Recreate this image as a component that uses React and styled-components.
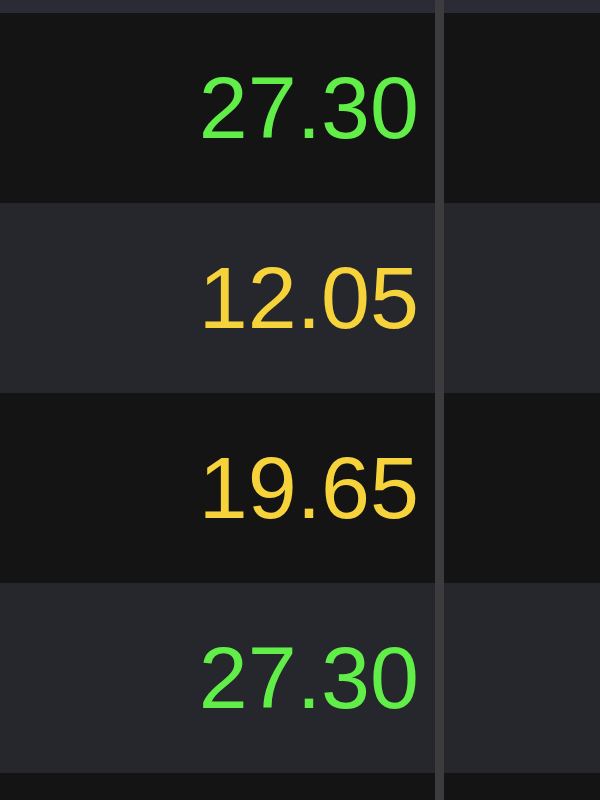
import React from "react";
import styled, { createGlobalStyle } from "styled-components";

const Global = createGlobalStyle`
  html, body { margin: 0; padding: 0; background: #141414; }
  body { width: 600px; height: 800px; overflow: hidden; }
`;

const Table = styled.div`
  width: 600px;
  height: 800px;
  display: flex;
  flex-direction: column;
  background: #141414;
  overflow: hidden;
  font-family: "Liberation Sans", Arial, sans-serif;
`;

const HeaderStrip = styled.div`
  flex: 0 0 13px;
  display: grid;
  grid-template-columns: 435px 9px 1fr;
  background: #2b2b36;
`;

const Row = styled.div`
  flex: 0 0 190px;
  display: grid;
  grid-template-columns: 435px 9px 1fr;
  background: ${(p) => (p.$alt ? "#26272c" : "#141414")};
`;

const Divider = styled.div`
  background: #3c3c3e;
`;

const ValueCell = styled.div`
  display: flex;
  align-items: center;
  justify-content: flex-end;
  padding-right: 16px;
  font-size: 88px;
  letter-spacing: 0;
  line-height: 1;
  color: ${(p) => (p.$tone === "up" ? "#62ee48" : "#f7d33b")};
`;

const EmptyCell = styled.div``;

const rows = [
  { v: "27.30", tone: "up" },
  { v: "12.05", tone: "mid" },
  { v: "19.65", tone: "mid" },
  { v: "27.30", tone: "up" },
  { v: "", tone: "mid" },
];

export default function App() {
  return (
    <>
      <Global />
      <Table>
        <HeaderStrip>
          <EmptyCell />
          <Divider />
          <EmptyCell />
        </HeaderStrip>
        {rows.map((r, i) => (
          <Row key={i} $alt={i % 2 === 1}>
            <ValueCell $tone={r.tone}>{r.v}</ValueCell>
            <Divider />
            <EmptyCell />
          </Row>
        ))}
      </Table>
    </>
  );
}
